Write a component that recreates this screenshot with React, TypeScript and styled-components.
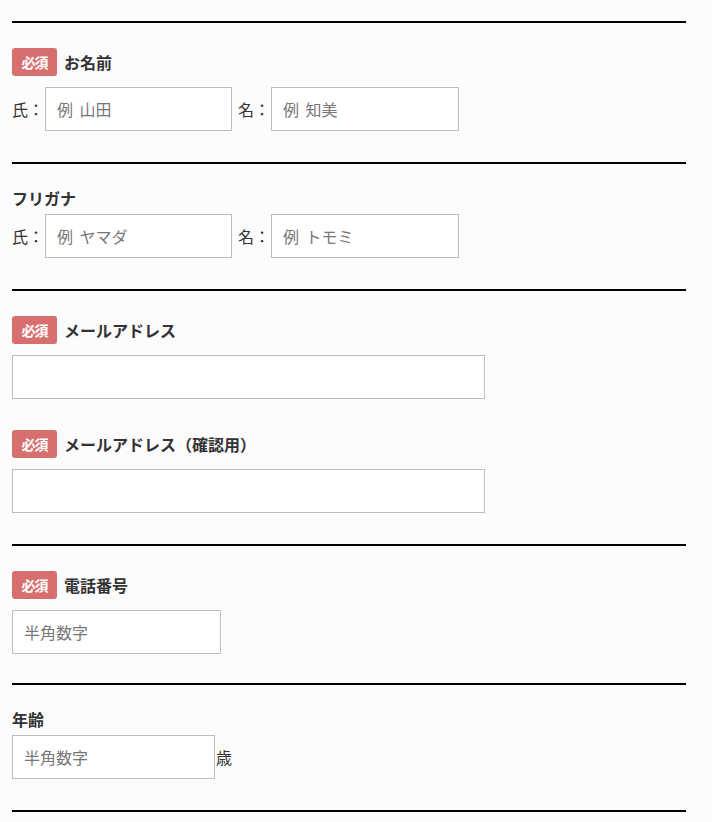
import React from "react";
import styled, { createGlobalStyle } from "styled-components";

const GlobalStyle = createGlobalStyle`
  html, body {
    margin: 0;
    padding: 0;
    background: #fcfcfc;
  }
  body {
    font-family: "Noto Sans CJK JP", "Noto Sans", sans-serif;
    color: #333;
  }
`;

const Form = styled.form`
  width: 674px;
  padding: 21px 0 0 12px;
`;

const Section = styled.section<{ $tight?: boolean }>`
  border-top: 2px solid #000;
  padding: 25px 0 ${(p) => (p.$tight ? "29px" : "31px")};
  display: flex;
  flex-direction: column;
  gap: 31px;
`;

const Closing = styled.div`
  border-top: 2px solid #000;
  height: 9px;
`;

const Field = styled.div`
  display: flex;
  flex-direction: column;
`;

const Header = styled.div<{ $required: boolean }>`
  display: flex;
  align-items: center;
  gap: 7px;
  height: ${(p) => (p.$required ? "28px" : "18px")};
  margin-bottom: ${(p) => (p.$required ? "11px" : "7px")};
`;

const Badge = styled.span`
  display: inline-flex;
  align-items: center;
  justify-content: center;
  width: 45px;
  height: 28px;
  border-radius: 3px;
  background: #d86f6f;
  color: #fff;
  font-size: 14px;
  font-weight: 700;
  letter-spacing: -1px;
`;

const Label = styled.span`
  font-size: 16px;
  font-weight: 700;
  line-height: 18px;
  color: #333;
`;

const Row = styled.div`
  display: flex;
  align-items: center;
`;

const Prefix = styled.span<{ $gap?: number }>`
  font-size: 16px;
  color: #333;
  margin-left: ${(p) => p.$gap ?? 0}px;
  width: 33px;
  white-space: nowrap;
`;

const Suffix = styled.span`
  font-size: 16px;
  color: #333;
  margin-left: 1px;
`;

const Input = styled.input<{ $w: number }>`
  box-sizing: border-box;
  width: ${(p) => p.$w}px;
  height: 44px;
  border: 1px solid #bdbdbd;
  background: #fff;
  padding: 0 11px;
  font-family: "Noto Sans CJK JP", "Noto Sans", sans-serif;
  font-size: 16px;
  word-spacing: 3px;
  color: #333;
  outline: none;
  &::placeholder {
    color: #777;
  }
`;

function Heading({ text, required }: { text: string; required?: boolean }) {
  return (
    <Header $required={!!required}>
      {required && <Badge>必須</Badge>}
      <Label>{text}</Label>
    </Header>
  );
}

function NamePair({ last, first }: { last: string; first: string }) {
  return (
    <Row>
      <Prefix>氏：</Prefix>
      <Input $w={187} placeholder={last} />
      <Prefix $gap={6}>名：</Prefix>
      <Input $w={188} placeholder={first} />
    </Row>
  );
}

export default function App() {
  return (
    <>
      <GlobalStyle />
      <Form onSubmit={(e) => e.preventDefault()}>
        <Section>
          <Field>
            <Heading text="お名前" required />
            <NamePair last="例 山田" first="例 知美" />
          </Field>
        </Section>

        <Section>
          <Field>
            <Heading text="フリガナ" />
            <NamePair last="例 ヤマダ" first="例 トモミ" />
          </Field>
        </Section>

        <Section>
          <Field>
            <Heading text="メールアドレス" required />
            <Input $w={473} type="email" />
          </Field>
          <Field>
            <Heading text="メールアドレス（確認用）" required />
            <Input $w={473} type="email" />
          </Field>
        </Section>

        <Section $tight>
          <Field>
            <Heading text="電話番号" required />
            <Row>
              <Input $w={209} placeholder="半角数字" />
            </Row>
          </Field>
        </Section>

        <Section>
          <Field>
            <Heading text="年齢" />
            <Row>
              <Input $w={203} placeholder="半角数字" />
              <Suffix>歳</Suffix>
            </Row>
          </Field>
        </Section>

        <Closing />
      </Form>
    </>
  );
}
